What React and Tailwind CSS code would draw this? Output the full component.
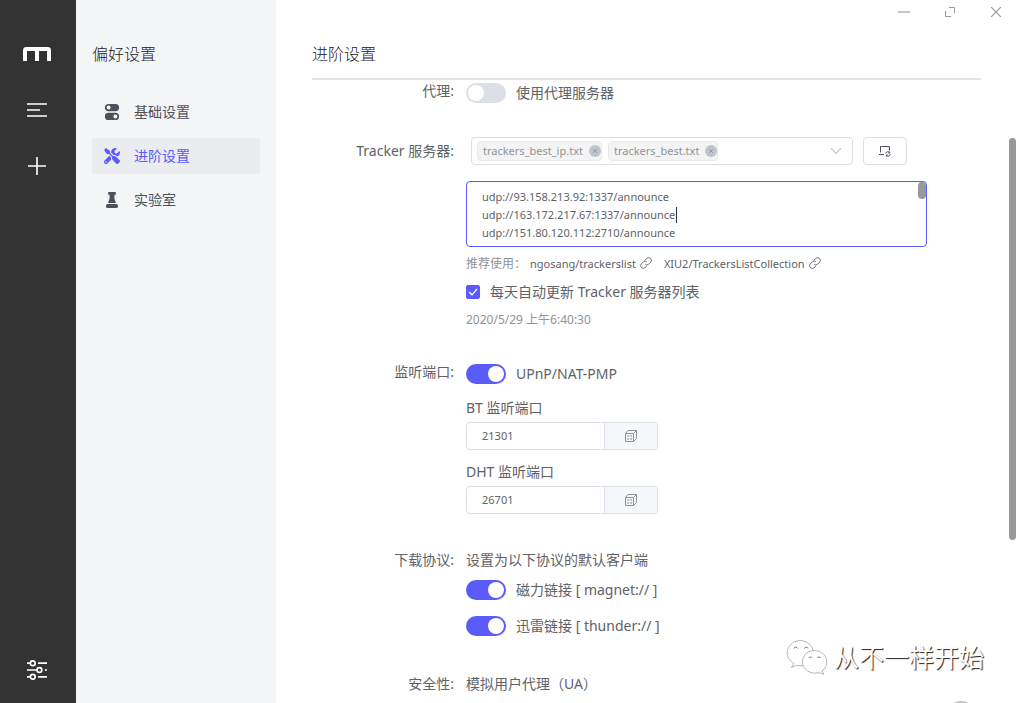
import React, { useState } from 'react';
import { FaTools } from 'react-icons/fa';

const NAV_ITEMS = [
    { id: 'basic', label: '基础设置', icon: TogglesIcon },
    { id: 'advanced', label: '进阶设置', icon: FaTools },
    { id: 'lab', label: '实验室', icon: LabIcon },
];

const TRACKER_SOURCES = ['trackers_best_ip.txt', 'trackers_best.txt'];

const TRACKERS = [
    'udp://93.158.213.92:1337/announce',
    'udp://163.172.217.67:1337/announce',
    'udp://151.80.120.112:2710/announce',
].join('\n');

/* Icons */

function LogoIcon() {
    return (
        <svg width="28" height="14" viewBox="0 0 28 14" fill="none" stroke="#fff" strokeWidth="4">
            <path d="M2 14V3.4Q2 2 3.4 2H24.6Q26 2 26 3.4V14M14 2V14" />
        </svg>
    );
}

function TaskListIcon() {
    return (
        <svg width="20" height="16" viewBox="0 0 20 16" fill="none" stroke="#fff" strokeWidth="1.6">
            <path d="M0 2H20M0 8H13M0 14H20" />
        </svg>
    );
}

function AddIcon() {
    return (
        <svg width="18" height="18" viewBox="0 0 18 18" fill="none" stroke="#fff" strokeWidth="1.6">
            <path d="M0 9H18M9 0V18" />
        </svg>
    );
}

function PreferencesIcon() {
    return (
        <svg width="20" height="20" viewBox="0 0 20 20" fill="none" stroke="#fff" strokeWidth="1.7">
            <circle cx="5.8" cy="3.2" r="2.4" />
            <circle cx="12.4" cy="10" r="2.4" />
            <circle cx="5.8" cy="16.8" r="2.4" />
            <path d="M0 3.2H3.2M11 3.2H20M0 10H10M18 10H20M0 16.8H3.2M11 16.8H20" />
        </svg>
    );
}

function TogglesIcon({ className }) {
    return (
        <svg className={className} viewBox="0 0 16 16" fill="currentColor" fillRule="evenodd">
            <path d="M4.5 0H11.5A3.6 3.6 0 0 1 11.5 7.2H4.5A3.6 3.6 0 0 1 4.5 0ZM4.6 1.6A2 2 0 1 0 4.6 5.6A2 2 0 1 0 4.6 1.6Z" />
            <path d="M4.5 8.8H11.5A3.6 3.6 0 0 1 11.5 16H4.5A3.6 3.6 0 0 1 4.5 8.8ZM11.4 10.4A2 2 0 1 0 11.4 14.4A2 2 0 1 0 11.4 10.4Z" />
        </svg>
    );
}

function LabIcon({ className }) {
    return (
        <svg className={className} viewBox="0 0 16 16" fill="currentColor">
            <path d="M4.2 0H11.8V2.8H10.4V6.5L12 11H4L5.6 6.5V2.8H4.2Z" />
            <rect x="2" y="12" width="12" height="4" rx="1.6" />
        </svg>
    );
}

function SyncIcon() {
    return (
        <svg width="12" height="12" viewBox="0 0 12 12" fill="none" stroke="#4d515a" strokeWidth="1">
            <path d="M1.5 7.500V1.500H10.500V5.500M0 9.500H5" />
            <path d="M6.600 8.600A2.300 2.300 0 0 1 10.700 7.700V6.500M10.900 8H9.200M11.400 9.400A2.300 2.300 0 0 1 7.300 10.300V11.500M7.100 10H8.800" />
        </svg>
    );
}

function LinkIcon() {
    return (
        <svg className="mb-0.5 ml-1" width="12" height="12" viewBox="0 0 12 12" fill="none" stroke="#606266" strokeWidth=".9">
            <path d="M5 3.2L6.8 1.4A2.4 2.4 0 0 1 10.6 5.2L8.4 7.4A2.4 2.4 0 0 1 5.2 7.2" />
            <path d="M7 8.8L5.2 10.6A2.4 2.4 0 0 1 1.4 6.8L3.6 4.6A2.4 2.4 0 0 1 6.8 4.8" />
        </svg>
    );
}

function DiceIcon() {
    return (
        <svg width="12" height="12" viewBox="0 0 12 12" fill="none" stroke="#909399" strokeWidth="1">
            <path d="M.5 3.5H8.5V11.5H.5ZM.5 3.5L3 .5H11.5L8.5 3.5M11.5 .5V8.5L8.5 11.5" />
            <path d="M2 6H4M5 6H7M2 9H4M5 9H7" stroke="#c0c4cc" strokeWidth="2" />
        </svg>
    );
}

function WechatIcon() {
    return (
        <svg width="42" height="36" viewBox="0 0 42 36" fill="#fff" stroke="#999" strokeWidth=".7">
            <path d="M8 24.5L5.5 28.5L11 26.2C22 29 29 21 27.5 13C26 4.500 19 1.200 13.500 1.500C6 2 1.200 8 1.200 14C1.200 18 4 22 8 24.500Z" />
            <path d="M36 32L38 35.200L32.500 33.600C24 36 16.500 30 16.500 23C16.500 16 22 11.500 28.500 11.500C35 11.500 40.800 16.500 40.800 23C40.800 27 39 30 36 32Z" />
            <path d="M8 9.5A1.800 1.800 0 0 1 11.500 9.500M18.500 9.500A1.800 1.800 0 0 1 22 9.500M23 19A1.600 1.600 0 0 1 26 19M31.500 19A1.600 1.600 0 0 1 34.500 19" stroke="#444" />
        </svg>
    );
}

/* Form parts */

function FormItem({ label, children }) {
    return (
        <div className="flex">
            <div className="w-[154px] shrink-0 pr-3 text-right leading-7">{label}</div>
            <div className="min-w-0 max-w-[461px] flex-1">{children}</div>
        </div>
    );
}

function Switch({ label, defaultChecked = false }) {
    return (
        <label className="flex h-8 items-center gap-[10px]">
            <input
                type="checkbox"
                role="switch"
                defaultChecked={defaultChecked}
                className="h-5 w-10 shrink-0 appearance-none rounded-full bg-[#dcdfe6] p-0.5 before:block before:size-4 before:rounded-full before:bg-white before:content-[''] checked:bg-[#5b5bfa] checked:before:ml-5"
            />
            <span>{label}</span>
        </label>
    );
}

function PortField({ id, label, value }) {
    return (
        <div className="pb-1">
            <label htmlFor={id} className="block leading-7">{label}</label>
            <div className="flex h-7 w-48 overflow-hidden rounded border border-[#dcdfe6]">
                <input
                    id={id}
                    type="text"
                    defaultValue={value}
                    className="min-w-0 flex-1 px-[15px] text-[11px] outline-none"
                />
                <button
                    type="button"
                    aria-label="随机端口"
                    className="flex w-[53px] items-center justify-center border-l border-[#dcdfe6] bg-[#f5f7fa]"
                >
                    <DiceIcon />
                </button>
            </div>
        </div>
    );
}

function TrackerSelect() {
    return (
        <div className="flex gap-[10px] pl-[5px]">
            <div className="relative flex h-7 w-[382px] items-center gap-1.5 rounded border border-[#dcdfe6] pl-[5px]">
                {TRACKER_SOURCES.map((source) => (
                    <span
                        key={source}
                        className="flex h-5 items-center gap-1.5 rounded border border-[#e9e9eb] bg-[#f4f4f5] pl-[5px] text-[11px] text-[#909399]"
                    >
                        {source}
                        <button
                            type="button"
                            aria-label={`移除 ${source}`}
                            className="flex size-3 items-center justify-center rounded-full bg-[#c0c4cc]"
                        >
                            <svg width="6" height="6" viewBox="0 0 6 6" stroke="#909399" strokeWidth=".8">
                                <path d="M1 1L5 5M5 1L1 5" />
                            </svg>
                        </button>
                    </span>
                ))}
                <select aria-label="Tracker 服务器" className="h-full min-w-0 flex-1 appearance-none outline-none">
                    <option value=""></option>
                </select>
                <svg className="pointer-events-none absolute right-[10px]" width="12" height="8" viewBox="0 0 12 8" fill="none" stroke="#c0c4cc" strokeWidth="1.2">
                    <path d="M1 1.200L6 6.500L11 1.200" />
                </svg>
            </div>
            <button
                type="button"
                aria-label="同步 Tracker"
                className="flex h-7 w-11 items-center justify-center rounded border border-[#dcdfe6]"
            >
                <SyncIcon />
            </button>
        </div>
    );
}

export default function App() {
    const [current, setCurrent] = useState('advanced');

    return (
        <div className="relative flex h-screen overflow-hidden bg-white font-['Noto_Sans','Noto_Sans_CJK_SC',sans-serif] text-sm text-[#606266]">
            {/* Main toolbar */}
            <div className="flex w-[76px] shrink-0 flex-col items-center justify-between bg-[#333] pt-10 pr-0.5 pb-[19px]">
                <div className="flex flex-col gap-7">
                    <a href="#home" aria-label="Motrix" className="flex size-7 items-center justify-center">
                        <LogoIcon />
                    </a>
                    <button type="button" aria-label="任务列表" className="flex size-7 items-center justify-center">
                        <TaskListIcon />
                    </button>
                    <button type="button" aria-label="新建任务" className="flex size-7 items-center justify-center">
                        <AddIcon />
                    </button>
                </div>
                <button type="button" aria-label="偏好设置" className="flex size-7 items-center justify-center">
                    <PreferencesIcon />
                </button>
            </div>

            {/* Preference menu */}
            <aside className="w-[200px] shrink-0 bg-[#f4f5f7] px-4 pt-[42px]">
                <h2 className="text-base leading-6 font-light text-[#1f2023]">偏好设置</h2>
                <nav className="mt-7 flex flex-col gap-2">
                    {NAV_ITEMS.map(({ id, label, icon: Icon }) => (
                        <a
                            key={id}
                            href={`#${id}`}
                            onClick={() => setCurrent(id)}
                            className={
                                id === current
                                    ? 'flex h-9 items-center gap-[14px] rounded bg-[#eaecf0] px-3 text-[#5b5bfa]'
                                    : 'flex h-9 items-center gap-[14px] rounded px-3 text-[#4d515a]'
                            }
                        >
                            <Icon className="size-4" />
                            <span>{label}</span>
                        </a>
                    ))}
                </nav>
            </aside>

            {/* Advanced settings */}
            <main className="min-w-0 flex-1 pr-[35px] pl-9">
                <header className="h-20 border-b-2 border-[#e4e4e4] pt-[42px]">
                    <h1 className="text-base leading-6 font-light text-[#1f2023]">进阶设置</h1>
                </header>

                <form className="-mt-[3px] flex flex-col gap-7">
                    <FormItem label="代理:">
                        <Switch label="使用代理服务器" />
                    </FormItem>

                    <FormItem label="Tracker 服务器:">
                        <TrackerSelect />
                        <div className="relative mt-4 mb-[3px]">
                            <textarea
                                aria-label="Tracker 列表"
                                rows={3}
                                defaultValue={TRACKERS}
                                className="block h-[66px] w-full resize-none overflow-hidden rounded border border-[#5b5bfa] px-[15px] pt-1.5 text-[11px] leading-[18px] outline-none"
                            />
                            <span className="absolute top-[26px] left-[210px] h-4 w-px bg-[#303133]" />
                            <span className="absolute top-px right-px h-[17px] w-2 rounded-full bg-[#999]" />
                        </div>
                        <div className="flex h-7 items-center text-xs text-[#909399]">
                            推荐使用：
                            <a href="#ngosang" className="ml-1 flex items-center text-[11px] text-[#606266]">
                                ngosang/trackerslist
                                <LinkIcon />
                            </a>
                            <a href="#xiu2" className="ml-3 flex items-center text-[11px] text-[#606266]">
                                XIU2/TrackersListCollection
                                <LinkIcon />
                            </a>
                        </div>
                        <label className="flex h-7 items-center gap-[10px]">
                            <span className="relative flex size-[14px] items-center justify-center">
                                <input
                                    type="checkbox"
                                    defaultChecked
                                    className="size-[14px] appearance-none rounded-xs border border-[#dcdfe6] checked:border-[#5b5bfa] checked:bg-[#5b5bfa]"
                                />
                                <svg className="pointer-events-none absolute" width="10" height="8" viewBox="0 0 10 8" fill="none" stroke="#fff" strokeWidth="1.2">
                                    <path d="M1 4L4 6.800L9 1" />
                                </svg>
                            </span>
                            每天自动更新 Tracker 服务器列表
                        </label>
                        <p className="mt-1 text-xs leading-5 text-[#909399]">2020/5/29 上午6:40:30</p>
                    </FormItem>

                    <FormItem label="监听端口:">
                        <div className="flex flex-col gap-1">
                            <Switch label="UPnP/NAT-PMP" defaultChecked />
                            <PortField id="bt-port" label="BT 监听端口" value="21301" />
                            <PortField id="dht-port" label="DHT 监听端口" value="26701" />
                        </div>
                    </FormItem>

                    <FormItem label="下载协议:">
                        <p className="leading-7">设置为以下协议的默认客户端</p>
                        <div className="flex flex-col gap-1">
                            <Switch label="磁力链接 [ magnet:// ]" defaultChecked />
                            <Switch label="迅雷链接 [ thunder:// ]" defaultChecked />
                        </div>
                    </FormItem>

                    <FormItem label="安全性:">
                        <p className="leading-7">模拟用户代理（UA）</p>
                    </FormItem>
                </form>
            </main>

            {/* Window controls */}
            <div className="absolute top-0 right-0 flex h-6 items-center gap-[34px] pr-[14px]">
                <button type="button" aria-label="最小化" className="flex h-6 w-3 items-center justify-center">
                    <svg width="12" height="12" viewBox="0 0 12 12" stroke="#c4c4c4" strokeWidth="2">
                        <path d="M0 6H12" />
                    </svg>
                </button>
                <button type="button" aria-label="最大化" className="flex h-6 w-3 items-center justify-center">
                    <svg width="10" height="10" viewBox="0 0 10 10" fill="none" stroke="#999">
                        <path d="M4 .5H9.500V6M.5 4V9.500H6" />
                    </svg>
                </button>
                <button type="button" aria-label="关闭" className="flex h-6 w-3 items-center justify-center">
                    <svg width="10" height="10" viewBox="0 0 10 10" stroke="#999" strokeWidth="1.2">
                        <path d="M0 0L10 10M10 0L0 10" />
                    </svg>
                </button>
            </div>

            {/* Scrollbar thumb */}
            <div className="absolute top-[138px] right-0 h-[402px] w-[7px] rounded-full bg-[#999]" />

            {/* Account badge */}
            <div className="absolute right-8 bottom-7 flex items-center gap-1.5">
                <WechatIcon />
                <span className="text-[25px] leading-9 text-white [text-shadow:1px_1px_1px_#222]">从不一样开始</span>
            </div>
            <div className="absolute right-[39px] -bottom-[30px] size-8 rounded-full bg-[#c4c4c4]" />
        </div>
    );
}
